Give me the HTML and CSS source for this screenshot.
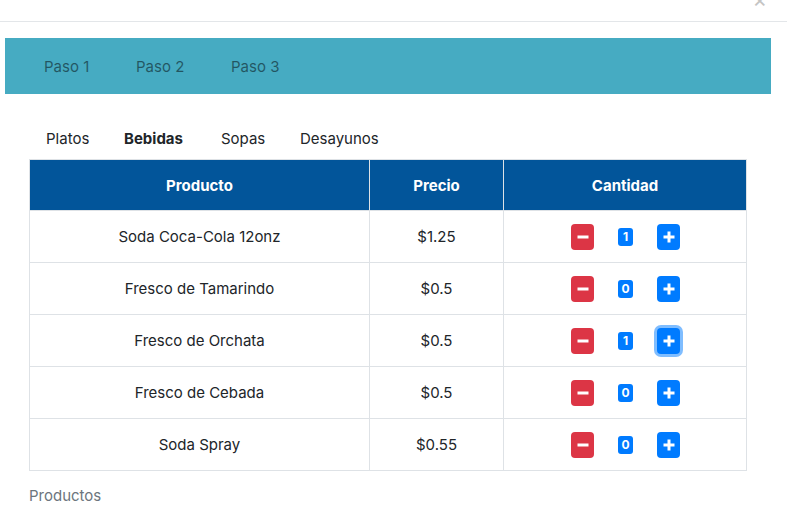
FILE: index.html
```html
<!DOCTYPE html>
<html lang="es">
<head>
<meta charset="utf-8">
<title>Pedido</title>
<link rel="stylesheet" href="styles.css">
</head>
<body>
<div class="modal-top"><span class="close">×</span></div>
<nav class="steps">
  <a class="step">Paso 1</a>
  <a class="step">Paso 2</a>
  <a class="step">Paso 3</a>
</nav>
<div class="content">
  <ul class="tabs">
    <li class="tab">Platos</li>
    <li class="tab active">Bebidas</li>
    <li class="tab">Sopas</li>
    <li class="tab">Desayunos</li>
  </ul>
  <table class="products">
    <colgroup><col class="c1"><col class="c2"><col class="c3"></colgroup>
    <thead>
      <tr><th>Producto</th><th>Precio</th><th>Cantidad</th></tr>
    </thead>
    <tbody>
      <tr><td>Soda Coca-Cola 12onz</td><td>$1.25</td><td><div class="qty"><button class="btn minus"><svg viewBox="0 0 12 12" width="12" height="12"><rect x="0.5" y="4.5" width="11" height="3" fill="#fff"/></svg></button><span class="badge">1</span><button class="btn plus"><svg viewBox="0 0 12 12" width="12" height="12"><rect x="0.5" y="4.5" width="11" height="3" fill="#fff"/><rect x="4.5" y="0.5" width="3" height="11" fill="#fff"/></svg></button></div></td></tr>
      <tr><td>Fresco de Tamarindo</td><td>$0.5</td><td><div class="qty"><button class="btn minus"><svg viewBox="0 0 12 12" width="12" height="12"><rect x="0.5" y="4.5" width="11" height="3" fill="#fff"/></svg></button><span class="badge">0</span><button class="btn plus"><svg viewBox="0 0 12 12" width="12" height="12"><rect x="0.5" y="4.5" width="11" height="3" fill="#fff"/><rect x="4.5" y="0.5" width="3" height="11" fill="#fff"/></svg></button></div></td></tr>
      <tr><td>Fresco de Orchata</td><td>$0.5</td><td><div class="qty"><button class="btn minus"><svg viewBox="0 0 12 12" width="12" height="12"><rect x="0.5" y="4.5" width="11" height="3" fill="#fff"/></svg></button><span class="badge">1</span><button class="btn plus focus"><svg viewBox="0 0 12 12" width="12" height="12"><rect x="0.5" y="4.5" width="11" height="3" fill="#fff"/><rect x="4.5" y="0.5" width="3" height="11" fill="#fff"/></svg></button></div></td></tr>
      <tr><td>Fresco de Cebada</td><td>$0.5</td><td><div class="qty"><button class="btn minus"><svg viewBox="0 0 12 12" width="12" height="12"><rect x="0.5" y="4.5" width="11" height="3" fill="#fff"/></svg></button><span class="badge">0</span><button class="btn plus"><svg viewBox="0 0 12 12" width="12" height="12"><rect x="0.5" y="4.5" width="11" height="3" fill="#fff"/><rect x="4.5" y="0.5" width="3" height="11" fill="#fff"/></svg></button></div></td></tr>
      <tr><td>Soda Spray</td><td>$0.55</td><td><div class="qty"><button class="btn minus"><svg viewBox="0 0 12 12" width="12" height="12"><rect x="0.5" y="4.5" width="11" height="3" fill="#fff"/></svg></button><span class="badge">0</span><button class="btn plus"><svg viewBox="0 0 12 12" width="12" height="12"><rect x="0.5" y="4.5" width="11" height="3" fill="#fff"/><rect x="4.5" y="0.5" width="3" height="11" fill="#fff"/></svg></button></div></td></tr>
    </tbody>
  </table>
  <p class="caption">Productos</p>
</div>
</body>
</html>
```

FILE: styles.css
```css
* { box-sizing: border-box; }
html, body { margin: 0; padding: 0; background: #fff; }
body {
  font-family: Inter, "Noto Sans", "Liberation Sans", sans-serif;
  color: #212529;
  font-size: 16px;
  overflow: hidden;
}
.modal-top {
  height: 22px;
  border-bottom: 1px solid #e3e6e9;
  display: flex;
  justify-content: flex-end;
  overflow: hidden;
}
.close {
  font-size: 22px;
  line-height: 1;
  color: #c4c4c4;
  margin-top: -12px;
  margin-right: 20px;
}
.steps {
  margin: 16px 16px 0 5px;
  height: 56px;
  background: #46abc2;
  display: flex;
  align-items: center;
  padding-left: 39px;
}
.step {
  font-size: 15px;
  color: rgba(0, 0, 0, 0.5);
  white-space: nowrap;
  flex-shrink: 0;
}
.step:nth-child(1) { width: 92px; }
.step:nth-child(2) { width: 95px; }
.content { padding-left: 29px; }
.tabs {
  list-style: none;
  margin: 0;
  padding: 0 0 0 17px;
  height: 65px;
  display: flex;
  align-items: flex-end;
  padding-bottom: 11px;
}
.tab { font-size: 15px; line-height: 18px; white-space: nowrap; }
.tab:nth-child(1) { width: 78px; }
.tab:nth-child(2) { width: 97px; }
.tab:nth-child(3) { width: 79px; }
.tab.active { font-weight: 700; }
.products {
  width: 718px;
  border-collapse: collapse;
  border: 1px solid #dee2e6;
}
.c1 { width: 340px; }
.c2 { width: 134px; }
.products th {
  background: #02559a;
  color: #fff;
  font-weight: 700;
  height: 51px;
  border: 1px solid #dee2e6;
  font-size: 15px;
}
.products td {
  height: 52px;
  text-align: center;
  border: 1px solid #dee2e6;
  font-size: 15px;
  padding: 0;
}
.qty {
  display: flex;
  justify-content: center;
  align-items: center;
  gap: 24px;
  padding-left: 1px;
}
.btn {
  width: 23px;
  height: 26px;
  border: 0;
  border-radius: 4px;
  padding: 0;
  display: flex;
  align-items: center;
  justify-content: center;
}
.minus { background: #dc3545; }
.plus { background: #007bff; }
.plus.focus { box-shadow: 0 0 0 3px rgba(0, 123, 255, 0.5); }
.badge {
  width: 15px;
  height: 18px;
  background: #007bff;
  color: #fff;
  border-radius: 3px;
  font-size: 12px;
  font-weight: 700;
  display: flex;
  align-items: center;
  justify-content: center;
}
.caption {
  margin: 15px 0 0;
  color: #6c757d;
  font-size: 15px;
}
```
